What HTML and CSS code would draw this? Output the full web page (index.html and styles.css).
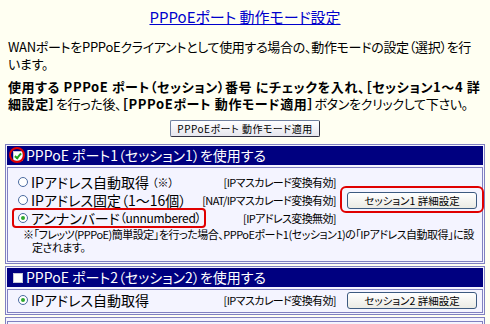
FILE: index.html
```html
<!DOCTYPE html>
<html lang="ja">
<head>
    <meta charset="UTF-8">
    <title>PPPoEポート 動作モード設定</title>
    <link rel="stylesheet" href="styles.css">
</head>
<body>

    <h1 class="title"><a href="#">PPPoEポート 動作モード設定</a></h1>

    <p class="intro">WANポートをPPPoEクライアントとして使用する場合の、動作モードの設定（選択）を行います。</p>
    <p class="intro"><b>使用する PPPoE ポート（セッション）番号 にチェックを入れ、［セッション1～4 詳細設定］</b>を行った後、<b>［PPPoEポート 動作モード適用］</b>ボタンをクリックして下さい。</p>

    <div class="apply"><button class="btn btn-apply">PPPoEポート 動作モード適用</button></div>

    <div class="port">
        <div class="port-head">
            <span class="mark"><span class="check on"></span></span>PPPoE ポート1（セッション1）を使用する
        </div>
        <div class="port-body">
            <div class="row">
                <span class="opt"><span class="radio"></span>IPアドレス自動取得 <small>（※）</small></span>
                <span class="mode">[IPマスカレード変換有効]</span>
                <span></span>
            </div>
            <div class="row">
                <span class="opt"><span class="radio"></span>IPアドレス固定（1～16個）</span>
                <span class="mode">[NAT/IPマスカレード変換有効]</span>
                <span class="cell"><span class="ring"><button class="btn btn-detail">セッション1 詳細設定</button></span></span>
            </div>
            <div class="row">
                <span class="opt picked"><span class="radio on"></span>アンナンバード<span class="en">（unnumbered）</span></span>
                <span class="mode">[IPアドレス変換無効]</span>
                <span></span>
            </div>
            <p class="note">※「フレッツ(PPPoE)簡単設定」を行った場合、PPPoEポート1(セッション1)の「IPアドレス自動取得」に設定されます。</p>
        </div>
    </div>

    <div class="port">
        <div class="port-head">
            <span class="check"></span>PPPoE ポート2（セッション2）を使用する
        </div>
        <div class="port-body short">
            <div class="row">
                <span class="opt"><span class="radio on"></span>IPアドレス自動取得</span>
                <span class="mode">[IPマスカレード変換有効]</span>
                <span class="cell"><button class="btn btn-detail">セッション2 詳細設定</button></span>
            </div>
        </div>
    </div>

    <div class="port">
        <div class="port-body tail"></div>
    </div>

</body>
</html>
```

FILE: styles.css
```css
body {
    margin: 0;
    background-color: #fffff2;
    font-family: "Noto Sans CJK JP", sans-serif;
    font-feature-settings: "palt";
    font-size: 13px;
    line-height: 17px;
    color: #000;
}
.title {
    margin: 8px 0 0;
    text-align: center;
    font-size: 15px;
    font-weight: normal;
    line-height: 18px;
}
.title a {
    color: #0000cc;
}
.intro {
    margin: 12px 8px 0;
    line-height: 17px;
    letter-spacing: -0.3px;
}
.intro + .intro {
    margin-top: 6px;
}
.intro b {
    font-weight: bold;
    letter-spacing: 0.6px;
}
.apply {
    margin-top: 8px;
    height: 17px;
    display: flex;
    justify-content: center;
}
.btn {
    font-family: "Noto Sans CJK JP", sans-serif;
    font-feature-settings: "palt";
    color: #000;
    cursor: pointer;
    padding: 0;
}
.btn-apply {
    width: 150px;
    height: 17px;
    font-size: 10px;
    letter-spacing: 0.5px;
    line-height: 15px;
    background: linear-gradient(#ffffff, #e6e6ee);
    border: 1px solid #7080a0;
    border-right-color: #303040;
    border-bottom-color: #303040;
    border-radius: 2px;
}
.port {
    margin: 7px 5px 0;
    border: 1px solid #8080c0;
    background: #f4f4ff;
    padding: 1px;
}
.port + .port {
    margin-top: 2px;
}
.port-head {
    height: 19px;
    background: #000080;
    color: #fff;
    font-size: 14px;
    line-height: 19px;
    display: flex;
    align-items: center;
    padding-left: 6px;
}
.mark {
    position: relative;
    display: inline-flex;
}
.mark::after {
    content: "";
    position: absolute;
    left: -4px;
    top: -4px;
    width: 12px;
    height: 12px;
    border: 2px solid #e00000;
    border-radius: 50%;
}
.check {
    display: inline-block;
    width: 8px;
    height: 8px;
    margin-right: 3px;
    background: #fff;
    border: 1px solid #c8c8d8;
    position: relative;
}
.check.on::before {
    content: "";
    position: absolute;
    left: 2px;
    top: 0;
    width: 2px;
    height: 5px;
    border: solid #21a121;
    border-width: 0 2px 2px 0;
    transform: rotate(40deg);
}
.port-body {
    margin-top: 2px;
    border: 1px solid #8080c0;
    padding: 5px 0 7px;
}
.port-body.short {
    height: 22px;
    padding: 0;
}
.port-body.tail {
    height: 30px;
    padding: 0;
}
.row {
    display: grid;
    grid-template-columns: 1fr auto 130px;
    column-gap: 11px;
    align-items: center;
    height: 18px;
    padding: 0 5px 0 10px;
}
.short .row {
    height: 20px;
}
.opt {
    display: inline-flex;
    align-items: center;
    font-size: 14px;
    line-height: 18px;
    white-space: nowrap;
    width: max-content;
}
.opt small {
    font-size: 11px;
    margin-left: 3px;
}
.opt .en {
    font-size: 12px;
    letter-spacing: -0.3px;
}
.picked {
    position: relative;
}
.picked::after {
    content: "";
    position: absolute;
    left: -6px;
    right: -5px;
    top: -1px;
    bottom: -1px;
    border: 2px solid #e00000;
    border-radius: 4px;
}
.radio {
    display: inline-block;
    width: 8px;
    height: 8px;
    border: 1px solid #4a6aa0;
    border-radius: 50%;
    background: #fff;
    margin-right: 3px;
    position: relative;
}
.radio.on::before {
    content: "";
    position: absolute;
    left: 2px;
    top: 2px;
    width: 4px;
    height: 4px;
    border-radius: 50%;
    background: #2fa82f;
}
.mode {
    font-size: 11px;
    letter-spacing: -0.6px;
    text-align: right;
    white-space: nowrap;
}
.cell {
    display: flex;
    justify-content: flex-end;
}
.ring {
    position: relative;
    display: inline-flex;
}
.ring::after {
    content: "";
    position: absolute;
    left: -7px;
    right: -7px;
    top: -6px;
    bottom: -4px;
    border: 2px solid #e00000;
    border-radius: 6px;
}
.btn-detail {
    width: 130px;
    height: 17px;
    font-size: 10.5px;
    line-height: 15px;
    background: linear-gradient(#ffffff, #ebebe4);
    border: 1px solid #3c5a80;
    border-radius: 3px;
}
.note {
    margin: 1px 0 0 15px;
    font-size: 11px;
    line-height: 13px;
    letter-spacing: -0.5px;
    text-indent: -9px;
    padding-left: 9px;
}
```
